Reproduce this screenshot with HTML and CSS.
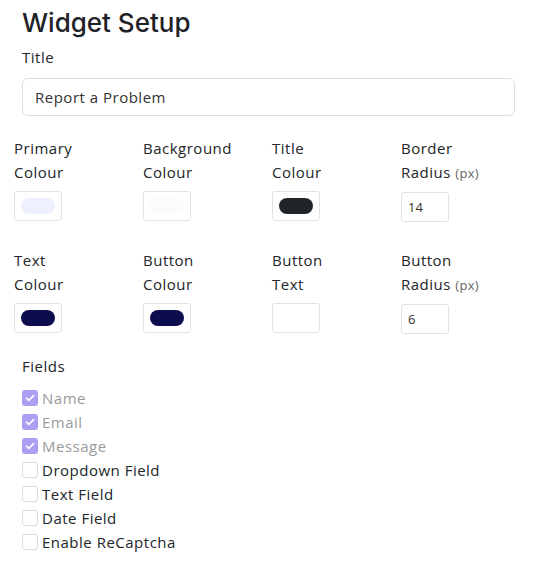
FILE: index.html
```html
<!DOCTYPE html>
<html lang="en">
<head>
    <meta charset="UTF-8">
    <meta name="viewport" content="width=device-width, initial-scale=1.0">
    <title>Widget Setup</title>
    <link rel="stylesheet" href="styles.css">
</head>
<body>
    <div class="setup">
        <h1 class="setup-title">Widget Setup</h1>

        <div class="form-group">
            <label for="title">Title</label>
            <input type="text" id="title" class="text-input" value="Report a Problem">
        </div>

        <div class="options">
            <div class="option">
                <div class="option-label">Primary<br>Colour</div>
                <div class="swatch"><span class="swatch-fill" style="background-color: #eef0ff;"></span></div>
            </div>
            <div class="option">
                <div class="option-label">Background<br>Colour</div>
                <div class="swatch"><span class="swatch-fill" style="background-color: #fbfbfb;"></span></div>
            </div>
            <div class="option">
                <div class="option-label">Title<br>Colour</div>
                <div class="swatch"><span class="swatch-fill" style="background-color: #212529;"></span></div>
            </div>
            <div class="option">
                <div class="option-label">Border<br>Radius <small>(px)</small></div>
                <input type="text" class="num-input" value="14">
            </div>

            <div class="option">
                <div class="option-label">Text<br>Colour</div>
                <div class="swatch"><span class="swatch-fill" style="background-color: #0d0c4d;"></span></div>
            </div>
            <div class="option">
                <div class="option-label">Button<br>Colour</div>
                <div class="swatch"><span class="swatch-fill" style="background-color: #0d0c4d;"></span></div>
            </div>
            <div class="option">
                <div class="option-label">Button<br>Text</div>
                <div class="swatch"><span class="swatch-fill" style="background-color: #ffffff;"></span></div>
            </div>
            <div class="option">
                <div class="option-label">Button<br>Radius <small>(px)</small></div>
                <input type="text" class="num-input" value="6">
            </div>
        </div>

        <div class="fields">
            <div class="fields-title">Fields</div>
            <label class="check disabled"><span class="box checked"></span>Name</label>
            <label class="check disabled"><span class="box checked"></span>Email</label>
            <label class="check disabled"><span class="box checked"></span>Message</label>
            <label class="check"><span class="box"></span>Dropdown Field</label>
            <label class="check"><span class="box"></span>Text Field</label>
            <label class="check"><span class="box"></span>Date Field</label>
            <label class="check"><span class="box"></span>Enable ReCaptcha</label>
        </div>
    </div>
</body>
</html>
```

FILE: styles.css
```css
body {
    margin: 0;
    padding: 0;
    background-color: #ffffff;
    color: #222529;
    font-family: 'Open Sans', 'Noto Sans', sans-serif;
    font-size: 15px;
    line-height: 24px;
    letter-spacing: 0.5px;
}

.setup {
    padding: 7px 24px 0 22px;
}

.setup-title {
    margin: 0 0 7px 0;
    font-family: 'Inter', sans-serif;
    font-size: 26px;
    font-weight: 500;
    line-height: 31px;
    letter-spacing: 0;
    color: #1e2227;
}

.form-group label {
    display: block;
    margin-bottom: 9px;
}

.text-input {
    box-sizing: border-box;
    width: 100%;
    height: 38px;
    padding: 0 12px;
    border: 1px solid #dedede;
    border-radius: 6px;
    font-family: inherit;
    font-size: 15px;
    letter-spacing: 0.5px;
    color: #333333;
}

.options {
    display: grid;
    grid-template-columns: repeat(4, 129px);
    row-gap: 26px;
    margin: 20px 0 0 -8px;
}

.option-label {
    margin-bottom: 7px;
}

.option-label small {
    font-size: 13px;
    letter-spacing: 0.3px;
    color: #666666;
}

.swatch {
    box-sizing: border-box;
    width: 48px;
    height: 30px;
    padding: 6px 6px;
    border: 1px solid #e2e2e2;
    border-radius: 3px;
}

.swatch-fill {
    display: block;
    height: 100%;
    border-radius: 8px;
}

.num-input {
    box-sizing: border-box;
    width: 48px;
    height: 30px;
    padding: 0 6px;
    border: 1px solid #e2e2e2;
    border-radius: 3px;
    font-family: inherit;
    font-size: 13px;
    color: #333333;
}

.fields {
    margin-top: 20px;
}

.fields-title {
    margin-bottom: 8px;
}

.check {
    display: flex;
    align-items: center;
    gap: 4px;
}

.check.disabled {
    color: #9a9a9a;
}

.box {
    box-sizing: border-box;
    width: 16px;
    height: 16px;
    border: 1px solid #dcdcdc;
    border-radius: 3px;
}

.box.checked {
    border: none;
    background-color: #ab9ff2;
    background-image: url("data:image/svg+xml,%3Csvg xmlns='http://www.w3.org/2000/svg' viewBox='0 0 16 16'%3E%3Cpath d='M4.5 8.2l2.3 2.2 4.7-4.7' fill='none' stroke='%23ffffff' stroke-width='1.8' stroke-linecap='round' stroke-linejoin='round'/%3E%3C/svg%3E");
    background-size: 16px 16px;
}
```
